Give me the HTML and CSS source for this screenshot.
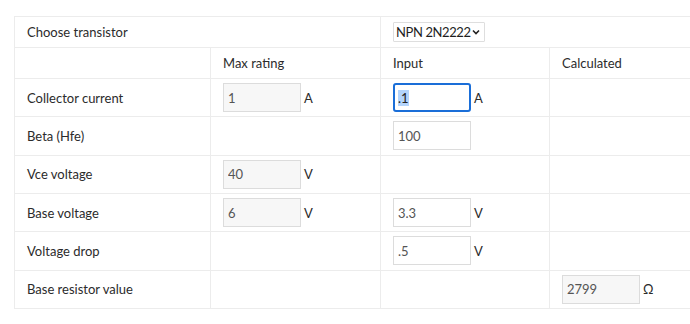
FILE: index.html
```html
<!DOCTYPE html>
<html lang="en">
<head>
    <meta charset="UTF-8">
    <title>Transistor base resistor</title>
    <link rel="stylesheet" href="styles.css">
</head>
<body>
    <table class="calc">
        <colgroup>
            <col class="c-label">
            <col class="c-max">
            <col class="c-input">
            <col class="c-calc">
        </colgroup>
        <tr>
            <td colspan="2">Choose transistor</td>
            <td colspan="2">
                <select class="picker">
                    <option>NPN 2N2222</option>
                </select>
            </td>
        </tr>
        <tr>
            <td></td>
            <td>Max rating</td>
            <td>Input</td>
            <td>Calculated</td>
        </tr>
        <tr class="row-in">
            <td>Collector current</td>
            <td><div class="pair"><input class="field" type="text" value="1" readonly><span>A</span></div></td>
            <td><div class="pair"><input class="field" id="ic" type="text" value=".1" autofocus><span>A</span></div></td>
            <td></td>
        </tr>
        <tr class="row-in">
            <td>Beta (Hfe)</td>
            <td></td>
            <td><div class="pair"><input class="field" type="text" value="100"></div></td>
            <td></td>
        </tr>
        <tr class="row-in">
            <td>Vce voltage</td>
            <td><div class="pair"><input class="field" type="text" value="40" readonly><span>V</span></div></td>
            <td></td>
            <td></td>
        </tr>
        <tr class="row-in">
            <td>Base voltage</td>
            <td><div class="pair"><input class="field" type="text" value="6" readonly><span>V</span></div></td>
            <td><div class="pair"><input class="field" type="text" value="3.3"><span>V</span></div></td>
            <td></td>
        </tr>
        <tr class="row-in">
            <td>Voltage drop</td>
            <td></td>
            <td><div class="pair"><input class="field" type="text" value=".5"><span>V</span></div></td>
            <td></td>
        </tr>
        <tr class="row-in">
            <td>Base resistor value</td>
            <td></td>
            <td></td>
            <td><div class="pair"><input class="field" type="text" value="2799" readonly><span>Ω</span></div></td>
        </tr>
    </table>

    <script>
        const ic = document.getElementById('ic');
        ic.focus();
        ic.select();
    </script>
</body>
</html>
```

FILE: styles.css
```css
/* Страница */
body {
    margin: 0;
    padding: 16px 0 0 14px;
    overflow: hidden;
    font-family: Lato, "Open Sans", sans-serif;
    font-size: 13px;
    color: #2b2b2b;
    background: #fff;
}

/* Таблица калькулятора */
.calc {
    border-collapse: collapse;
    table-layout: fixed;
    width: 704px;
}

.c-label { width: 196px; }
.c-max { width: 170px; }
.c-input { width: 169px; }
.c-calc { width: 169px; }

.calc td {
    border: 1px solid #ececec;
    padding: 5px 12px;
    line-height: 20px;
    height: 20px;
    white-space: nowrap;
    vertical-align: middle;
}

.calc .row-in td {
    padding-top: 4px;
    padding-bottom: 4px;
    height: 29.33px;
}

/* Выбор транзистора */
.picker {
    -webkit-appearance: none;
    appearance: none;
    display: block;
    box-sizing: border-box;
    height: 20px;
    padding: 0 13px 0 2px;
    margin: 0;
    border: 1px solid #dedede;
    border-radius: 1px;
    font-family: inherit;
    font-size: 13px;
    letter-spacing: -0.4px;
    line-height: 18px;
    color: #1e1e1e;
    background: #fff url("data:image/svg+xml,%3Csvg xmlns='http://www.w3.org/2000/svg' width='8' height='6' viewBox='0 0 8 6'%3E%3Cpath d='M1 1.5l3 3 3-3' fill='none' stroke='%23222' stroke-width='1.6'/%3E%3C/svg%3E") no-repeat right 4px center;
}

/* Поле + единица измерения */
.pair {
    display: flex;
    align-items: center;
    gap: 3px;
    height: 29.33px;
}

.field {
    box-sizing: border-box;
    width: 78px;
    height: 29px;
    padding: 0 4px;
    margin: 0;
    border: 1px solid #dcdcdc;
    border-radius: 0;
    font-family: inherit;
    font-size: 13px;
    color: #555;
    background: #fff;
}

.field[readonly] {
    background: #f7f7f7;
}

.field:focus {
    outline: none;
    border: 2px solid #1a6ed8;
    border-radius: 3px;
    padding: 0 3px;
    color: #222;
}

.field::selection {
    background: #b3d4fc;
    color: #222;
}
```
